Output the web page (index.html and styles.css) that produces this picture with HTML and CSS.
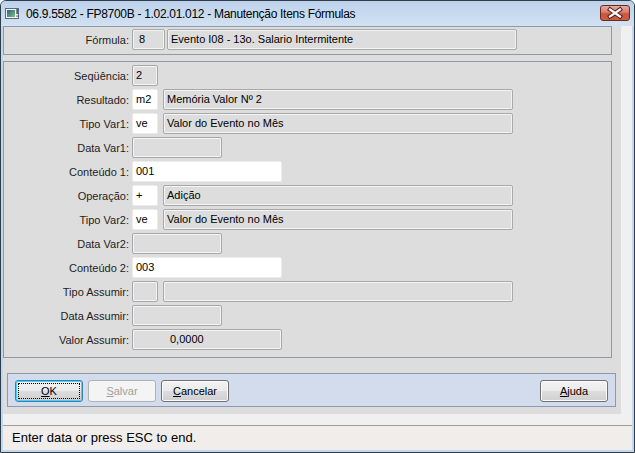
FILE: index.html
```html
<!DOCTYPE html>
<html lang="pt">
<head>
<meta charset="utf-8">
<title>Manutenção Itens Fórmulas</title>
<link rel="stylesheet" href="styles.css">
</head>
<body>
<div class="window">
  <div class="titlebar">
    <svg class="appicon" width="15" height="11" viewBox="0 0 15 11">
      <defs>
        <linearGradient id="ig" x1="0" y1="0" x2="1" y2="1">
          <stop offset="0" stop-color="#2a5f86"/>
          <stop offset="1" stop-color="#7cc07c"/>
        </linearGradient>
      </defs>
      <rect x="0.5" y="0.5" width="13" height="10" fill="#f4f8fc" stroke="#5b6b7b"/>
      <rect x="2" y="2" width="8" height="7" fill="url(#ig)"/>
      <rect x="11.5" y="1" width="1.2" height="5" fill="#1a1a1a"/>
      <rect x="11.5" y="7.5" width="1.2" height="1.2" fill="#1a1a1a"/>
    </svg>
    <span class="title">06.9.5582 - FP8700B - 1.02.01.012 - Manutenção Itens Fórmulas</span>
    <div class="close">
      <svg width="28" height="14" viewBox="0 0 28 14">
        <path d="M9 3.5 L19 10.5 M19 3.5 L9 10.5" stroke="#5a1e16" stroke-width="4.2" stroke-linecap="square"/>
        <path d="M9 3.5 L19 10.5 M19 3.5 L9 10.5" stroke="#ffffff" stroke-width="2.2" stroke-linecap="square"/>
      </svg>
    </div>
  </div>
  <div class="frame">
    <div class="client">
      <div class="main">
        <div class="panel head">
          <div class="row">
            <span class="lbl">Fórmula:</span>
            <span class="fld dis w-fcode pad6">8</span>
            <span class="fld dis w-desc gap2">Evento I08 - 13o. Salario Intermitente</span>
          </div>
        </div>
        <div class="panel form">
          <div class="row">
            <span class="lbl">Seqüência:</span>
            <span class="fld dis w-code">2</span>
          </div>
          <div class="row">
            <span class="lbl">Resultado:</span>
            <span class="fld edit w-code">m2</span>
            <span class="fld dis w-desc gap5">Memória Valor Nº 2</span>
          </div>
          <div class="row">
            <span class="lbl">Tipo Var1:</span>
            <span class="fld edit w-code">ve</span>
            <span class="fld dis w-desc gap5">Valor do Evento no Mês</span>
          </div>
          <div class="row">
            <span class="lbl">Data Var1:</span>
            <span class="fld dis w-data"></span>
          </div>
          <div class="row">
            <span class="lbl">Conteúdo 1:</span>
            <span class="fld edit w-cont">001</span>
          </div>
          <div class="row">
            <span class="lbl">Operação:</span>
            <span class="fld edit w-code">+</span>
            <span class="fld dis w-desc gap5">Adição</span>
          </div>
          <div class="row">
            <span class="lbl">Tipo Var2:</span>
            <span class="fld edit w-code">ve</span>
            <span class="fld dis w-desc gap5">Valor do Evento no Mês</span>
          </div>
          <div class="row">
            <span class="lbl">Data Var2:</span>
            <span class="fld dis w-data"></span>
          </div>
          <div class="row">
            <span class="lbl">Conteúdo 2:</span>
            <span class="fld edit w-cont">003</span>
          </div>
          <div class="row">
            <span class="lbl">Tipo Assumir:</span>
            <span class="fld dis w-code"></span>
            <span class="fld dis w-desc gap5"></span>
          </div>
          <div class="row">
            <span class="lbl">Data Assumir:</span>
            <span class="fld dis w-data"></span>
          </div>
          <div class="row">
            <span class="lbl">Valor Assumir:</span>
            <span class="fld dis w-cont num">0,0000</span>
          </div>
        </div>
        <div class="btnbar">
          <button class="btn focus"><span class="focusring"><u>O</u>K</span></button>
          <button class="btn disabled"><u>S</u>alvar</button>
          <button class="btn"><u>C</u>ancelar</button>
          <button class="btn right"><u>A</u>juda</button>
        </div>
      </div>
    </div>
    <div class="status">Enter data or press ESC to end.</div>
  </div>
</div>
</body>
</html>
```

FILE: styles.css
```css
* { box-sizing: border-box; }

html, body {
  margin: 0;
  padding: 0;
  background: #ffffff;
}

body {
  font-family: "Liberation Sans", Arial, sans-serif;
  font-size: 11px;
  color: #000;
}

.window {
  width: 635px;
  height: 453px;
  border: 1px solid #2f3c4a;
  border-radius: 6px 6px 0 0;
  background: #c3d7ed;
  display: flex;
  flex-direction: column;
  overflow: hidden;
}

.titlebar {
  height: 25px;
  flex: none;
  display: flex;
  align-items: center;
  padding-left: 4px;
  background: linear-gradient(#bdd2eb, #d2e1f2);
}

.appicon {
  flex: none;
  display: block;
}

.title {
  margin-left: 6px;
  font-size: 12px;
  letter-spacing: -0.3px;
  color: #000;
  white-space: nowrap;
}

.close {
  margin-left: auto;
  margin-right: 4px;
  align-self: flex-start;
  margin-top: 4px;
  width: 30px;
  height: 16px;
  border: 1px solid #6c2920;
  border-radius: 3px;
  background: linear-gradient(#e6a99c 0%, #d77d6c 45%, #c75740 55%, #c9603f 100%);
  display: flex;
  align-items: center;
  justify-content: center;
}

.close svg { display: block; }

.frame {
  flex: 1;
  display: flex;
  flex-direction: column;
  padding: 0 2px 2px 2px;
}

.client {
  flex: none;
  height: 399px;
  background: #f0f0f0;
  display: flex;
  flex-direction: column;
}

.main {
  width: 618px;
  height: 388px;
  background: #dddddd;
  display: flex;
  flex-direction: column;
}

.panel {
  width: 609px;
  border: 1px solid #8e99aa;
  display: flex;
  flex-direction: column;
}

.panel.head {
  height: 29px;
  padding-top: 2px;
}

.panel.form {
  margin-top: 6px;
  height: 297px;
  padding-top: 3px;
  gap: 3px;
}

.row {
  display: flex;
  align-items: center;
  height: 21px;
}

.lbl {
  width: 125px;
  margin-right: 3px;
  text-align: right;
  color: #1e1e1e;
  white-space: nowrap;
}

.fld {
  height: 21px;
  line-height: 19px;
  padding-left: 3px;
  border-radius: 2px;
  white-space: nowrap;
  overflow: hidden;
}

.fld.dis {
  background: #dddddd;
  border: 1px solid #a9a9a9;
  box-shadow: inset 0 0 0 1px #f3f3f3;
}

.fld.edit {
  background: #ffffff;
  border: 1px solid #ececec;
}

.w-code { width: 26px; }
.w-fcode { width: 33px; }
.w-desc { width: 350px; }
.w-data { width: 90px; }
.w-cont { width: 150px; }

.gap5 { margin-left: 5px; }
.gap2 { margin-left: 2px; }
.pad6 { padding-left: 6px; }
.num { padding-left: 37px; }

.btnbar {
  margin-top: 15px;
  margin-left: 4px;
  width: 609px;
  height: 34px;
  border: 1px solid #8e99aa;
  background: #d3dcec;
  display: flex;
  align-items: flex-start;
  padding: 6px 7px 0 7px;
  gap: 5px;
}

.btn {
  width: 68px;
  height: 22px;
  padding: 0;
  font-family: "Liberation Sans", Arial, sans-serif;
  font-size: 11px;
  color: #000;
  border: 1px solid #707070;
  border-radius: 3px;
  background: linear-gradient(#f3f3f3 0%, #ebebeb 48%, #dddddd 52%, #cfcfcf 100%);
  box-shadow: inset 0 0 0 1px #fbfbfb;
  display: flex;
  align-items: center;
  justify-content: center;
}

.btn.focus {
  border-color: #3c7fb1;
  box-shadow: inset 0 0 0 1px #48d2f7;
  padding: 2px;
}

.focusring {
  width: 100%;
  height: 100%;
  border: 1px dotted #000;
  display: flex;
  align-items: center;
  justify-content: center;
}

.btn.disabled {
  color: #a0a0a0;
  border-color: #adb2b5;
  background: #f4f4f4;
  box-shadow: none;
}

.btn.right { margin-left: auto; }

.status {
  flex: none;
  height: 25px;
  border-top: 1px solid #9d9d9d;
  background: #f0edeb;
  font-size: 13px;
  line-height: 24px;
  padding-left: 9px;
  color: #000;
}
```
